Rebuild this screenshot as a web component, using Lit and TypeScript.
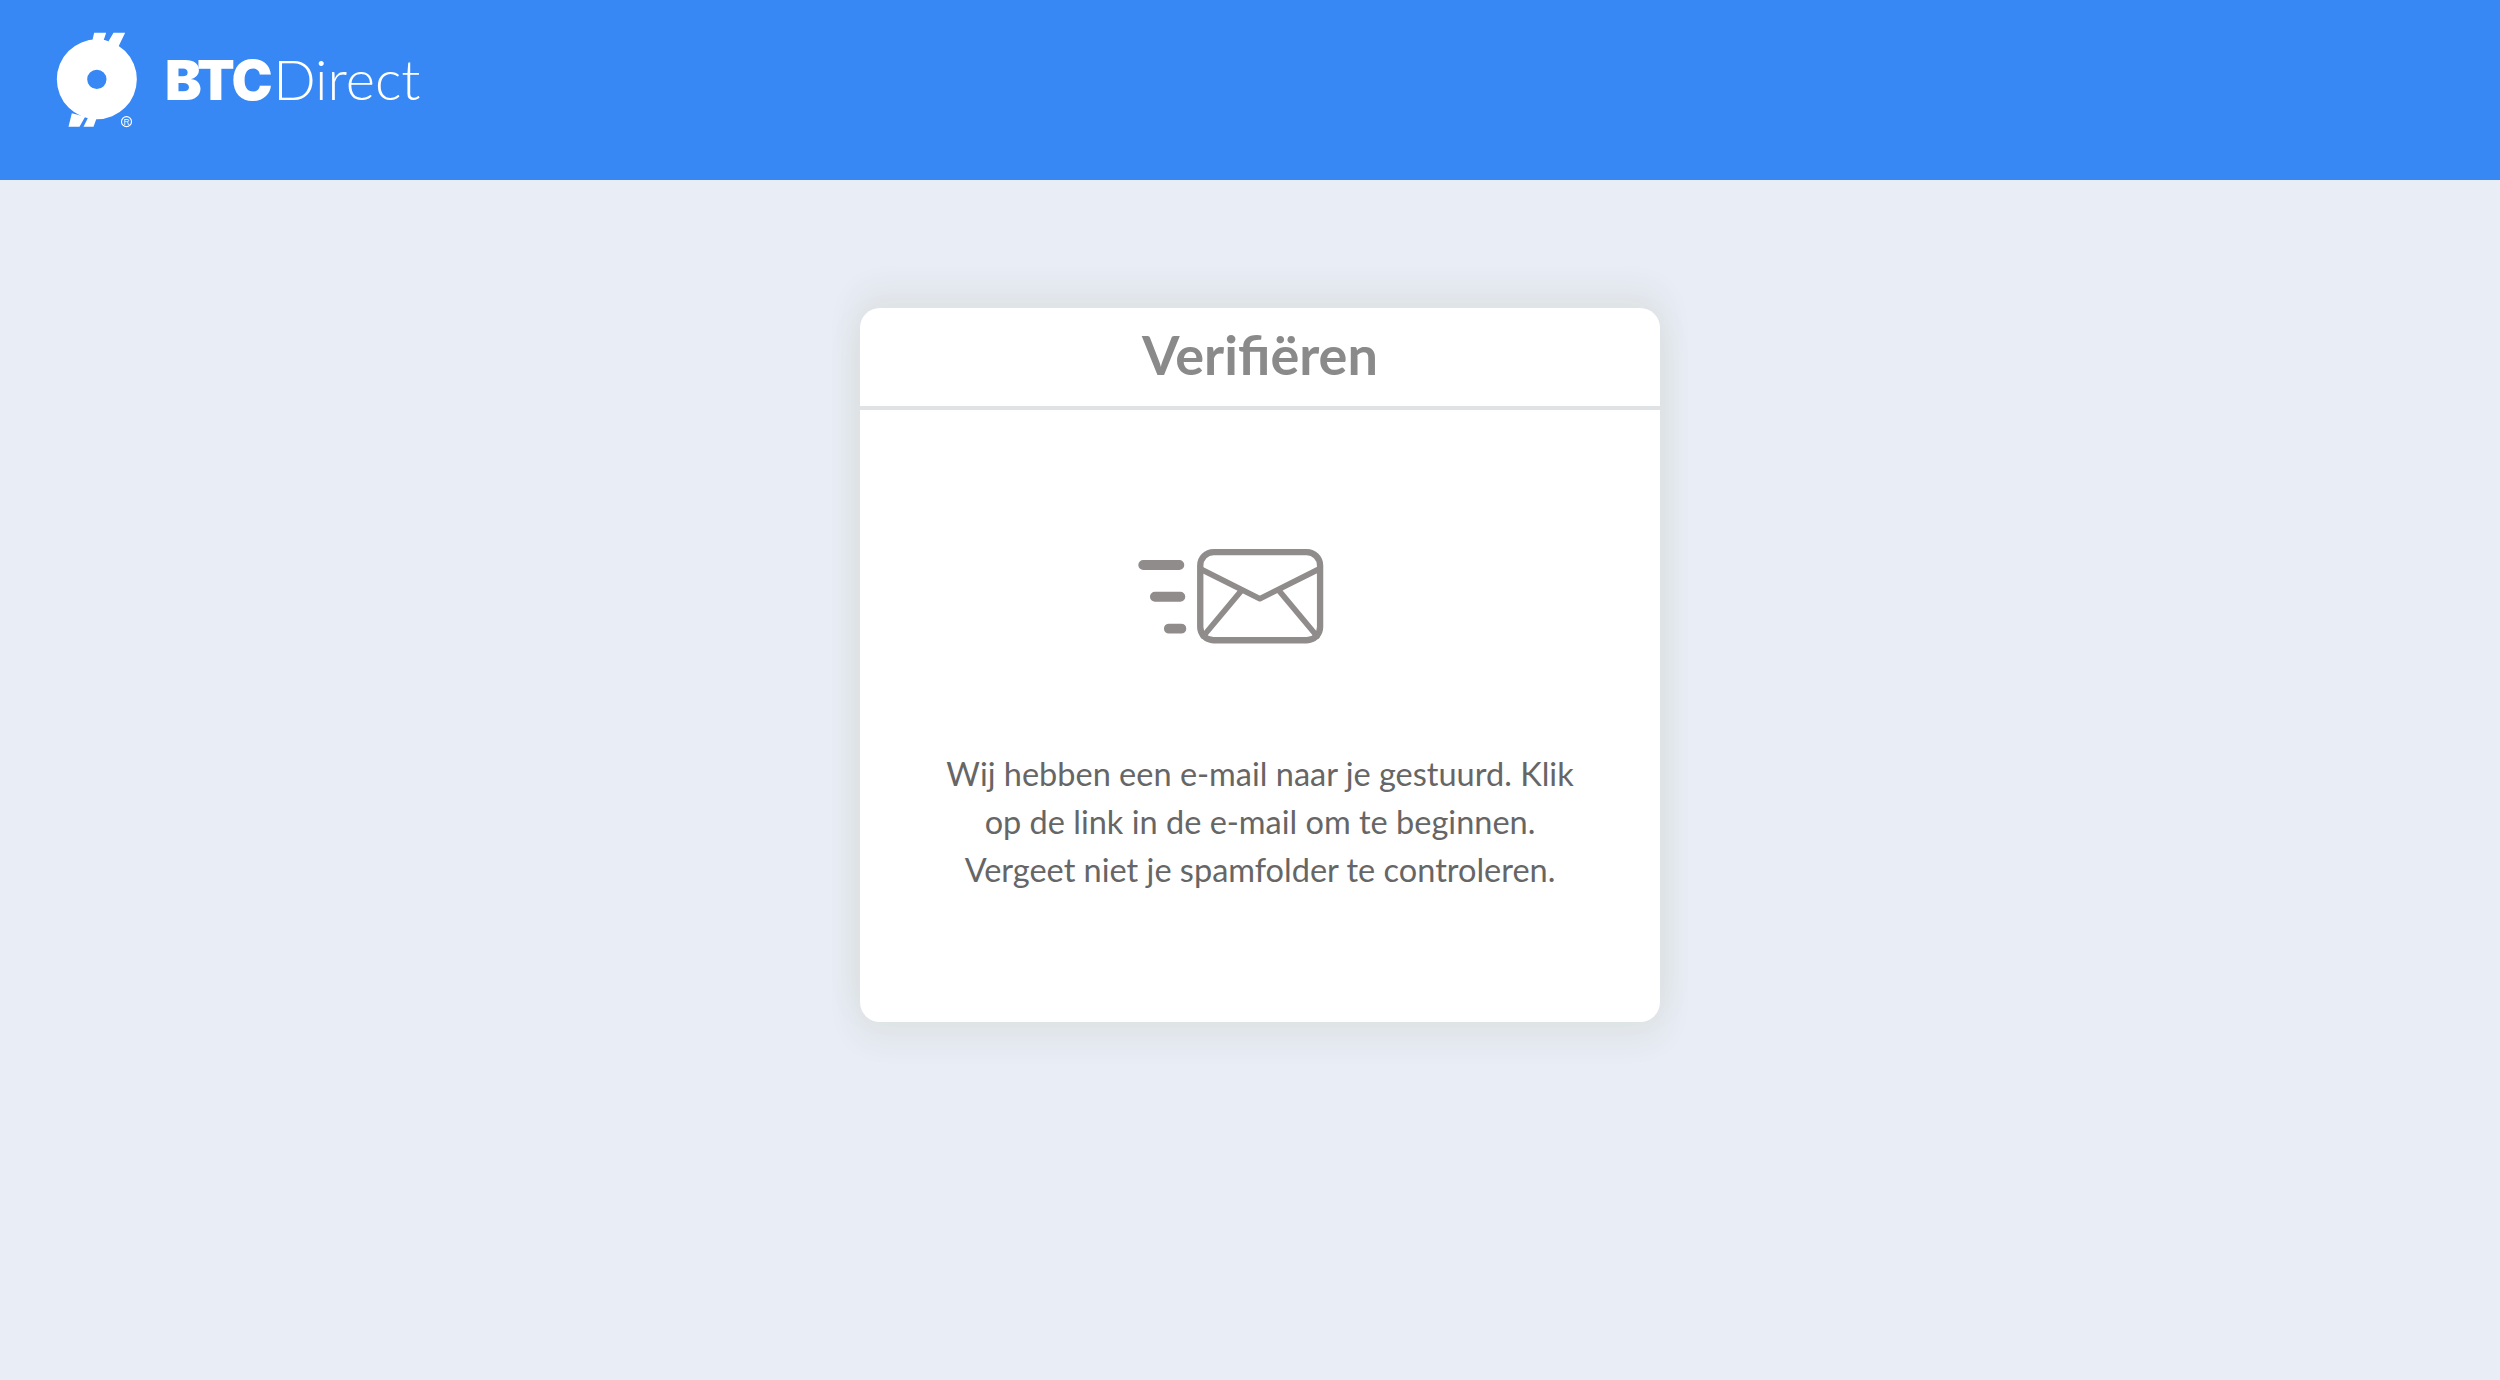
import { LitElement, html, css, svg } from 'lit';
import { customElement } from 'lit/decorators.js';

const coin = svg`
  <path d="M192 68h36l-10 30h-33z M250 68h35l-24 50-26-24z M125 310l40 10-17 30h-33z M175 320l26 0-11 30h-30z" fill="#fff"/>
  <path fill-rule="evenodd" fill="#fff" d="M200 88a120 120 0 1 0 0 240a120 120 0 1 0 0-240z M200 179a29 29 0 1 1 0 58a29 29 0 1 1 0-58z"/>
  <circle cx="289" cy="335" r="15" fill="none" stroke="#fff" stroke-width="3.5"/>
  <text x="289" y="344" text-anchor="middle" font-size="25" font-family="Liberation Sans, sans-serif" fill="#fff">R</text>
`;

const envelope = svg`
  <g fill="none" stroke="#8f8c8b" stroke-linecap="round" stroke-linejoin="round">
    <path stroke-width="30" d="M128 134h108 M163 229h76 M205 325h37"/>
    <rect x="299" y="95" width="360" height="265" rx="40" stroke-width="19"/>
    <path stroke-width="17" d="M302 147l176 88 176-88 M420 214l-112 134 M538 214l112 134"/>
  </g>
`;

@customElement('app-root')
export class AppRoot extends LitElement {
  static styles = css`
    :host {
      display: block;
      min-height: 1380px;
      background: #e8edf6;
      font-family: Lato, "Liberation Sans", sans-serif;
    }

    .topbar {
      display: flex;
      align-items: flex-start;
      height: 180px;
      padding: 30px 0 0 50px;
      box-sizing: border-box;
      background: #3787f5;
    }

    .coin {
      width: 87px;
      height: 100px;
      flex: none;
    }

    .brand {
      display: flex;
      align-items: baseline;
      margin: 19px 0 0 28px;
      line-height: 60px;
      color: #fff;
    }

    .brand b {
      font-family: Inter, sans-serif;
      font-size: 55px;
      font-weight: 900;
      letter-spacing: -1.5px;
    }

    .brand span {
      margin-left: 2px;
      font-size: 56px;
      font-weight: 300;
    }

    .content {
      display: flex;
      justify-content: center;
      padding: 128px 0 0 20px;
    }

    .card {
      width: 800px;
      height: 714px;
      background: #fff;
      border-radius: 20px;
      box-shadow: 0 14px 30px 5px rgba(130, 125, 60, 0.07), 0 -14px 30px 5px rgba(130, 125, 60, 0.07);
      overflow: hidden;
    }

    .card-title {
      display: flex;
      justify-content: center;
      align-items: center;
      height: 92px;
      padding-bottom: 6px;
      border-bottom: 4px solid #dfe3e6;
      font-size: 54px;
      font-weight: 700;
      color: #8a8a8a;
    }

    .card-body {
      display: flex;
      flex-direction: column;
      align-items: center;
      padding-top: 137px;
    }

    .mail {
      width: 253px;
      height: 100px;
    }

    .message {
      margin: 103px 0 0;
      width: 700px;
      text-align: center;
      font-size: 32.5px;
      line-height: 48px;
      color: #666;
    }
  `;

  render() {
    return html`
      <div class="topbar">
        <svg class="coin" viewBox="60 60 260 300">${coin}</svg>
        <div class="brand"><b>BTC</b><span>Direct</span></div>
      </div>
      <div class="content">
        <section class="card">
          <div class="card-title">Verifiëren</div>
          <div class="card-body">
            <svg class="mail" viewBox="100 80 760 300">${envelope}</svg>
            <p class="message">
              Wij hebben een e-mail naar je gestuurd. Klik<br />
              op de link in de e-mail om te beginnen.<br />
              Vergeet niet je spamfolder te controleren.
            </p>
          </div>
        </section>
      </div>
    `;
  }
}
